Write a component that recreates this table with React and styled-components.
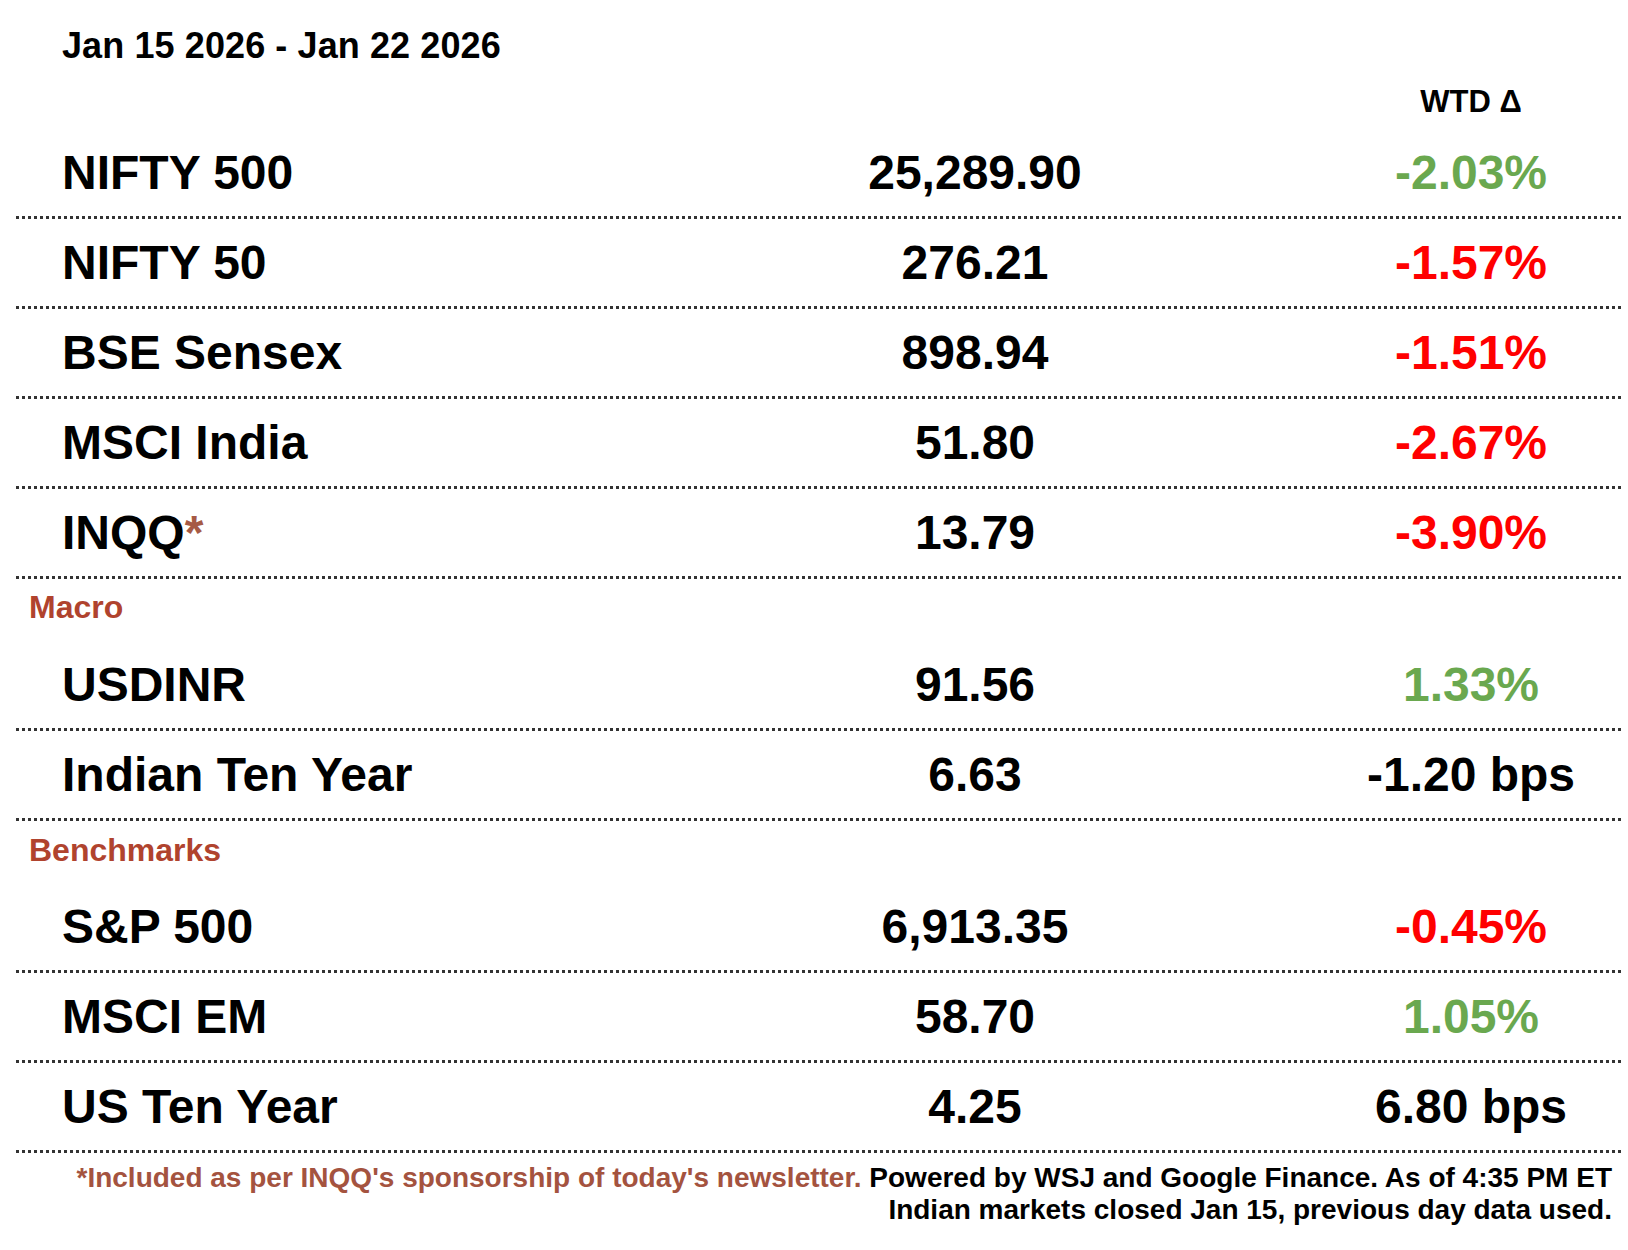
import styled, { createGlobalStyle } from 'styled-components';

const GlobalStyle = createGlobalStyle`
  body {
    margin: 0;
    background: #fff;
    font-family: "Liberation Sans", Arial, Helvetica, sans-serif;
    color: #000;
  }
`;

const colors = {
  up: '#6aa84f',
  down: '#ff0000',
  plain: '#000',
};

const Page = styled.div`
  width: 1628px;
  padding: 0 5px 0 16px;
  box-sizing: border-box;
`;

const DateLine = styled.div`
  padding: 26px 0 0 46px;
  font-size: 36px;
  line-height: 40px;
  font-weight: bold;
  letter-spacing: 0.1px;
`;

const Grid = styled.div`
  display: grid;
  grid-template-columns: 615px 688px 304px;
  align-items: center;
`;

const HeaderRow = styled(Grid)`
  height: 63px;
  padding-top: 8px;
  box-sizing: border-box;
`;

const HeaderCell = styled.div`
  grid-column: 3;
  text-align: center;
  font-size: 31px;
  font-weight: bold;
`;

const Row = styled(Grid)`
  height: 90px;
  padding-bottom: 3px;
  box-sizing: border-box;
  background: repeating-linear-gradient(to right, #333 0 3px, transparent 3px 6px)
    left bottom / 100% 3px no-repeat;
  font-size: 48px;
  font-weight: bold;
`;

const Label = styled.div`
  padding-left: 46px;
`;

const Star = styled.span`
  color: #a65a45;
`;

const Value = styled.div`
  text-align: center;
`;

const Change = styled.div`
  text-align: center;
  color: ${(props) => colors[props.tone]};
`;

const Section = styled.div`
  height: 62px;
  padding: ${(props) => (props.tight ? '10px' : '11px')} 0 0 13px;
  box-sizing: border-box;
  font-size: 32px;
  font-weight: bold;
  color: #b0432e;
`;

const Footer = styled.div`
  padding: 9px 11px 0 0;
  text-align: right;
  font-size: 28px;
  line-height: 32px;
  font-weight: bold;
`;

const FootNote = styled.span`
  color: #a4533f;
`;

const indian = [
  { name: 'NIFTY 500', value: '25,289.90', change: '-2.03%', tone: 'up' },
  { name: 'NIFTY 50', value: '276.21', change: '-1.57%', tone: 'down' },
  { name: 'BSE Sensex', value: '898.94', change: '-1.51%', tone: 'down' },
  { name: 'MSCI India', value: '51.80', change: '-2.67%', tone: 'down' },
  { name: 'INQQ', star: true, value: '13.79', change: '-3.90%', tone: 'down' },
];

const macro = [
  { name: 'USDINR', value: '91.56', change: '1.33%', tone: 'up' },
  { name: 'Indian Ten Year', value: '6.63', change: '-1.20 bps', tone: 'plain' },
];

const benchmarks = [
  { name: 'S&P 500', value: '6,913.35', change: '-0.45%', tone: 'down' },
  { name: 'MSCI EM', value: '58.70', change: '1.05%', tone: 'up' },
  { name: 'US Ten Year', value: '4.25', change: '6.80 bps', tone: 'plain' },
];

function MarketRow({ item }) {
  return (
    <Row>
      <Label>
        {item.name}
        {item.star && <Star>*</Star>}
      </Label>
      <Value>{item.value}</Value>
      <Change tone={item.tone}>{item.change}</Change>
    </Row>
  );
}

export default function App() {
  return (
    <>
      <GlobalStyle />
      <Page>
        <DateLine>Jan 15 2026 - Jan 22 2026</DateLine>
        <HeaderRow>
          <HeaderCell>WTD Δ</HeaderCell>
        </HeaderRow>
        {indian.map((item) => (
          <MarketRow key={item.name} item={item} />
        ))}
        <Section tight>Macro</Section>
        {macro.map((item) => (
          <MarketRow key={item.name} item={item} />
        ))}
        <Section>Benchmarks</Section>
        {benchmarks.map((item) => (
          <MarketRow key={item.name} item={item} />
        ))}
        <Footer>
          <FootNote>*Included as per INQQ's sponsorship of today's newsletter.</FootNote>{' '}
          Powered by WSJ and Google Finance. As of 4:35 PM ET
          <br />
          Indian markets closed Jan 15, previous day data used.
        </Footer>
      </Page>
    </>
  );
}
